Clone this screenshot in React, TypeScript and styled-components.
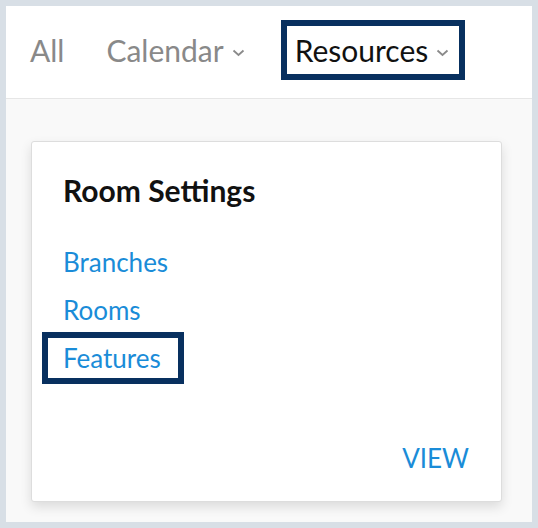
import styled, { createGlobalStyle } from "styled-components";

const GlobalStyle = createGlobalStyle`
  body {
    margin: 0;
    background: #d8dfe6;
    font-family: Lato, "Open Sans", sans-serif;
  }
`;

const Frame = styled.div`
  margin: 6px;
  width: 526px;
  height: 516px;
  display: flex;
  flex-direction: column;
  background: #ffffff;
`;

const Header = styled.nav`
  height: 93px;
  flex-shrink: 0;
  display: flex;
  align-items: flex-start;
  padding-top: 20px;
  box-sizing: border-box;
  border-bottom: 1px solid #e6e6e6;
`;

const NavItem = styled.a<{ $gap: number; $active?: boolean }>`
  display: flex;
  align-items: baseline;
  height: 48px;
  line-height: 48px;
  margin-left: ${(p) => p.$gap}px;
  padding: 0 10px 0 8px;
  font-size: 30px;
  color: ${(p) => (p.$active ? "#111111" : "#898989")};
  text-decoration: none;
  outline: ${(p) => (p.$active ? "6px solid #08305f" : "none")};
`;

const Caret = styled.svg`
  width: 13px;
  height: 8px;
  margin-left: 8px;
  position: relative;
  top: -5px;
`;

const Body = styled.main`
  flex: 1;
  background: #f9f9f9;
  padding: 42px 0 0 25px;
`;

const Card = styled.section`
  width: 471px;
  height: 361px;
  box-sizing: border-box;
  background: #ffffff;
  border: 1px solid #dddddd;
  border-radius: 3px;
  box-shadow: 0 5px 12px rgba(0, 0, 0, 0.12);
  padding: 30px 32px 27px 31px;
  display: flex;
  flex-direction: column;
  align-items: flex-start;
`;

const Title = styled.h2`
  margin: 0 0 34px;
  font-size: 30px;
  line-height: 36px;
  font-weight: 700;
  color: #111111;
`;

const LinkItem = styled.a<{ $active?: boolean }>`
  display: block;
  height: 40px;
  line-height: 40px;
  margin: 0 0 8px -15px;
  padding: 0 17px 0 15px;
  font-size: 26px;
  color: #1a8cd8;
  text-decoration: none;
  outline: ${(p) => (p.$active ? "6px solid #08305f" : "none")};
`;

const ViewLink = styled.a`
  margin-top: auto;
  align-self: flex-end;
  font-size: 26px;
  line-height: 32px;
  color: #1a8cd8;
  text-decoration: none;
`;

function Chevron() {
  return (
    <Caret viewBox="0 0 13 8">
      <path d="M1.5 1.5l5 4.5 5-4.5" fill="none" stroke="#8a8a8a" strokeWidth="1.8" />
    </Caret>
  );
}

export default function App() {
  return (
    <>
      <GlobalStyle />
      <Frame>
        <Header>
          <NavItem $gap={16}>All</NavItem>
          <NavItem $gap={24}>
            Calendar
            <Chevron />
          </NavItem>
          <NavItem $gap={32} $active>
            Resources
            <Chevron />
          </NavItem>
        </Header>
        <Body>
          <Card>
            <Title>Room Settings</Title>
            <LinkItem>Branches</LinkItem>
            <LinkItem>Rooms</LinkItem>
            <LinkItem $active>Features</LinkItem>
            <ViewLink>VIEW</ViewLink>
          </Card>
        </Body>
      </Frame>
    </>
  );
}
